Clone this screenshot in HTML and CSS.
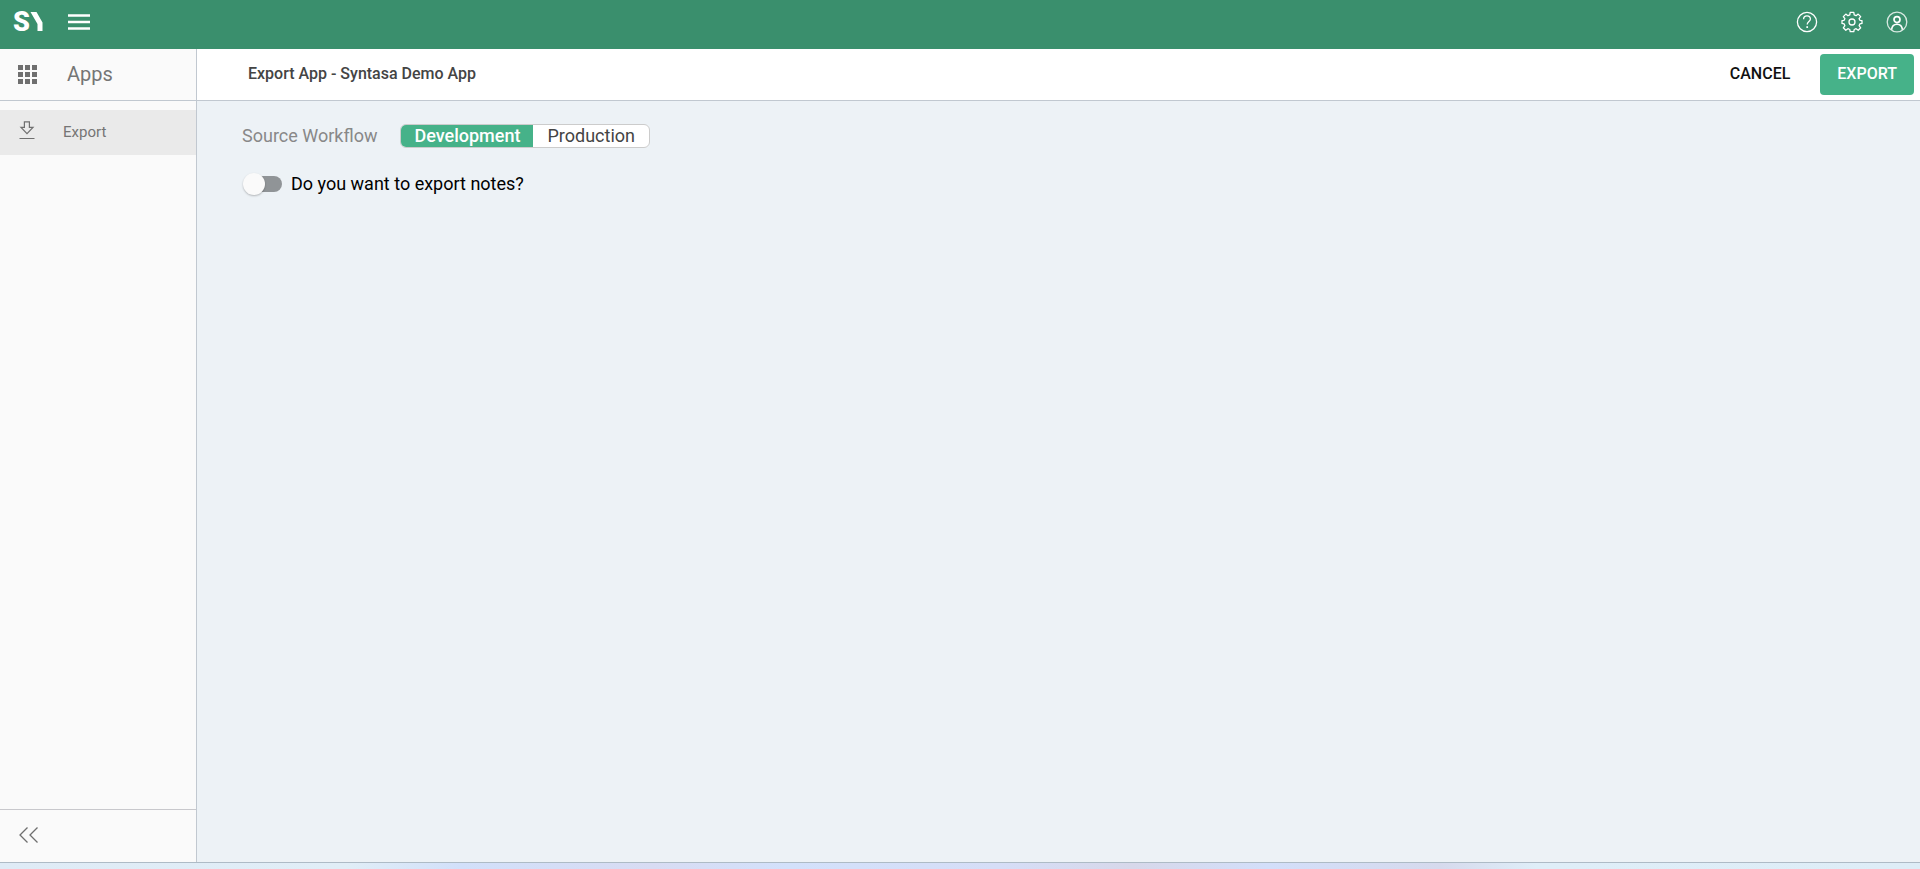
FILE: index.html
```html
<!DOCTYPE html>
<html lang="en">
<head>
<meta charset="utf-8">
<title>Export App</title>
<link rel="stylesheet" href="styles.css">
</head>
<body>
<header class="topbar">
  <a class="logo" href="#" aria-label="SY home">
    <svg width="32" height="37" viewBox="0 0 32 37"><text class="logo-s" x="0" y="27">S</text><path d="M17.500 8h6l6 10.500V27h-5v-7z" fill="#fff"/></svg>
  </a>
  <button class="icon-btn menu" aria-label="Menu">
    <svg width="22" height="16" viewBox="0 0 22 16"><path d="M0 1.500h22M0 8h22M0 14.500h22" stroke="#fff" stroke-width="2.400"/></svg>
  </button>
  <nav class="tools">
    <button class="icon-btn" aria-label="Help">
      <svg width="22" height="22" viewBox="0 0 22 22"><circle cx="11" cy="11" r="9.600"/><path d="M7.600 8.300C7.600 6 9 4.800 11 4.800s3.400 1.300 3.400 3.200c0 2.400-3.200 2.600-3.200 5.400"/><path d="M11.200 15.200v1.800" stroke-width="1.700"/></svg>
    </button>
    <button class="icon-btn" aria-label="Settings">
      <svg width="22" height="22" viewBox="0 0 22 22"><path d="M8.800 3.900 9.200 1.300h3.600l.4 2.600 1.900.8 2.100-1.600 2.500 2.500-1.600 2.100.8 1.600 2.100.3v2.800l-2.100.4-.8 1.900 1.600 2.100-2.500 2.500-2.100-1.600-1.900.8-.4 2.200H9.200l-.4-2.200-1.900-.8-2.100 1.600-2.500-2.500 1.600-2.100-.8-1.900-2.100-.4V9.600l2.100-.3.800-1.600-1.600-2.100 2.500-2.500 2.100 1.600z" stroke-linejoin="round"/><circle cx="11" cy="11" r="3"/></svg>
    </button>
    <button class="icon-btn" aria-label="Account">
      <svg width="22" height="22" viewBox="0 0 22 22"><circle cx="11" cy="11" r="9.800" opacity=".8"/><circle cx="11" cy="8.600" r="3" stroke-width="1.700"/><path d="M5.600 18.600c.3-3.400 2.200-5.400 5.400-5.400s5.100 2 5.400 5.400" stroke-width="1.600"/></svg>
    </button>
  </nav>
</header>
<div class="shell">
  <aside class="sidebar">
    <div class="side-head">
      <svg width="19" height="19" viewBox="0 0 19 19" fill="#6f6f6f"><path d="M0 0h5v5H0zM7 0h5v5H7zM14 0h5v5h-5zM0 7h5v5H0zM7 7h5v5H7zM14 7h5v5h-5zM0 14h5v5H0zM7 14h5v5H7zM14 14h5v5h-5z"/></svg>
      <span>Apps</span>
    </div>
    <a class="side-item" href="#">
      <svg width="16" height="19" viewBox="0 0 16 19" fill="none" stroke="#6f6f6f" stroke-width="1.200"><path d="M5.400.8h5v5.600h3.600L8 12.600 2 6.400h3.400zM.5 17.500h15"/></svg>
      <span>Export</span>
    </a>
    <div class="side-foot">
      <button class="icon-btn" aria-label="Collapse sidebar">
        <svg class="collapse" width="19" height="16" viewBox="0 0 19 16"><path d="M8.500.5 1 8l7.500 7.500M18.500.5 11 8l7.500 7.500"/></svg>
      </button>
    </div>
  </aside>
  <main class="main">
    <div class="titlebar">
      <h1>Export App - Syntasa Demo App</h1>
      <button class="btn">CANCEL</button>
      <button class="btn primary">EXPORT</button>
    </div>
    <form class="form">
      <div class="row">
        <span class="label" id="source">Source Workflow</span>
        <div class="segments" role="radiogroup" aria-labelledby="source">
          <label class="segment"><input type="radio" name="source" checked><span>Development</span></label>
          <label class="segment"><input type="radio" name="source"><span>Production</span></label>
        </div>
      </div>
      <label class="switch"><input type="checkbox" role="switch"><span>Do you want to export notes?</span></label>
    </form>
  </main>
</div>
<div class="strip"></div>
</body>
</html>
```
FILE: styles.css
```css
* { box-sizing: border-box; }
body {
  margin: 0;
  min-height: 100vh;
  display: flex;
  flex-direction: column;
  font-family: Roboto, "Liberation Sans", sans-serif;
  color: #000;
}
svg { display: block; }
button { font: inherit; cursor: pointer; }
a { text-decoration: none; }
.topbar {
  display: flex;
  align-items: center;
  height: 49px;
  padding: 0 12px 5px 13px;
  background: #3a8f6d;
}
.logo-s { font: 900 27px Roboto, sans-serif; fill: #fff; }
.icon-btn { padding: 0; border: 0; background: none; }
.menu { margin-left: 23px; }
.tools { display: flex; gap: 23px; margin-left: auto; }
.tools svg { fill: none; stroke: #fff; stroke-width: 1.3px; }
.shell { flex: 1; display: flex; }
.sidebar {
  width: 197px;
  display: flex;
  flex-direction: column;
  border-right: 1px solid #c1c8d0;
  background: #fafafa;
  color: #757575;
}
.side-head {
  display: flex;
  align-items: center;
  gap: 30px;
  height: 52px;
  padding-left: 18px;
  border-bottom: 1px solid #c1c8d0;
  font-size: 20px;
}
.side-head span { padding-bottom: 1px; }
.side-item {
  display: flex;
  align-items: center;
  gap: 28px;
  height: 45px;
  margin-top: 9px;
  padding: 0 0 2px 19px;
  background: #eaeaea;
  color: #757575;
  font-size: 15px;
}
.side-item svg { margin-bottom: 2px; }
.side-foot {
  display: flex;
  align-items: center;
  height: 53px;
  margin-top: auto;
  padding: 0 0 3px 19px;
  border-top: 1px solid #c8c8cc;
}
.collapse { fill: none; stroke: #6f6f6f; stroke-width: 1.3px; }
.main { flex: 1; background: #edf2f6; }
.titlebar {
  display: flex;
  align-items: center;
  height: 52px;
  padding: 0 6px 0 51px;
  border-bottom: 1px solid #c1c8d0;
  background: #fff;
}
h1 { flex: 1; margin: 0; padding-bottom: 2px; font-size: 16px; font-weight: 500; color: #444; }
.btn {
  height: 41px;
  padding: 0 17px 2px;
  border: 0;
  border-radius: 4px;
  background: none;
  color: #111;
  font-size: 16px;
  font-weight: 500;
}
.primary { margin-left: 13px; background: #46b289; color: #fff; }
.form { padding: 23px 45px; font-size: 18px; }
.row { display: flex; align-items: center; gap: 23px; }
.label { padding-bottom: 2px; color: #888; }
.segments {
  display: flex;
  overflow: hidden;
  border: 1px solid #ccc;
  border-radius: 6px;
  background: #fff;
  color: #444;
}
.segment { position: relative; padding: 0 14px; line-height: 22px; }
.segment input { position: absolute; opacity: 0; margin: 0; }
.segment:has(:checked) { padding: 0 13px; background: #46b289; color: #fff; font-weight: 500; }
.switch { display: flex; align-items: center; gap: 9px; width: max-content; margin-top: 25px; }
.switch input {
  appearance: none;
  position: relative;
  width: 38px;
  height: 16px;
  margin: 0 0 0 2px;
  border-radius: 8px;
  background: #909497;
}
.switch input::before {
  content: "";
  position: absolute;
  left: -1px;
  top: -3px;
  width: 22px;
  height: 22px;
  border-radius: 50%;
  background: #fafafa;
  box-shadow: 0 1px 2px rgba(0, 0, 0, .25);
}
.switch input:checked { background: #46b289; }
.switch input:checked::before { left: 18px; }
.strip {
  height: 7px;
  border-top: 1px solid #aebbc6;
  background: linear-gradient(90deg, #dfebf6, #e1eef7 18%, #d2e0fa 24%, #d8dcf3 34%, #d3e1fb 41%, #d6def7 52%, #d7d8ea 59%, #d3dffa 66%, #d6daed 75%, #dfeef8 80%, #deedf7);
}
```
